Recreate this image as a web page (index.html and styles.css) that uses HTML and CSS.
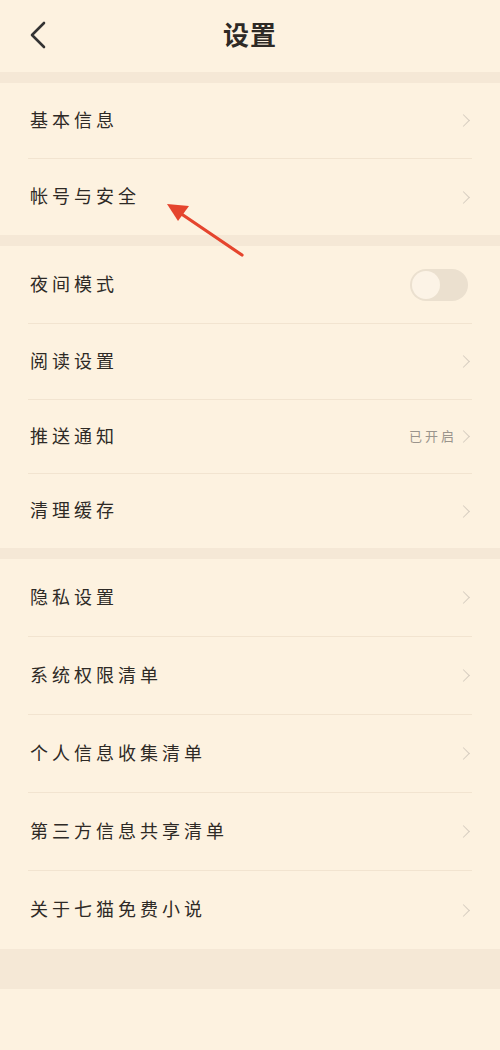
FILE: index.html
```html
<!DOCTYPE html>
<html lang="zh-CN">
<head>
  <meta charset="UTF-8" />
  <title>设置</title>
  <link rel="stylesheet" href="styles.css">
</head>
<body>
  <div id="page">
    <div id="title-bar">
      <span class="back">
        <svg width="18" height="28" viewBox="0 0 18 28"><path d="M15 2 L3 14 L15 26" fill="none" stroke="#333" stroke-width="2.6" stroke-linecap="round" stroke-linejoin="round"/></svg>
      </span>
      <div class="title">设置</div>
    </div>

    <div class="gap"></div>
    <div class="group">
      <div class="row"><span class="label">基本信息</span><span class="chev"></span></div>
      <div class="row"><span class="label">帐号与安全</span><span class="chev"></span></div>
    </div>

    <div class="gap"></div>
    <div class="group">
      <div class="row tall"><span class="label">夜间模式</span><span class="switch"><span class="knob"></span></span></div>
      <div class="row"><span class="label">阅读设置</span><span class="chev"></span></div>
      <div class="row short"><span class="label">推送通知</span><span class="value">已开启</span><span class="chev"></span></div>
      <div class="row short"><span class="label">清理缓存</span><span class="chev"></span></div>
    </div>

    <div class="gap"></div>
    <div class="group">
      <div class="row tall"><span class="label">隐私设置</span><span class="chev"></span></div>
      <div class="row tall"><span class="label">系统权限清单</span><span class="chev"></span></div>
      <div class="row tall"><span class="label">个人信息收集清单</span><span class="chev"></span></div>
      <div class="row tall"><span class="label">第三方信息共享清单</span><span class="chev"></span></div>
      <div class="row tall"><span class="label">关于七猫免费小说</span><span class="chev"></span></div>
    </div>
    <div class="gap footer"></div>

    <svg class="pointer" width="500" height="300" viewBox="0 0 500 300">
      <line x1="242" y1="255" x2="180" y2="213" stroke="#e5452e" stroke-width="3.2" stroke-linecap="round"/>
      <polygon points="167,204 189,206 178,221" fill="#e5452e"/>
    </svg>
  </div>
</body>
</html>
```

FILE: styles.css
```css
:root {
  --bg: #fdf2e0;
  --band: #f5e8d6;
  --line: #f2e4d0;
  --text: #2e2a26;
  --muted: #9a948c;
  --chev: #d6cdc0;
}
body {
  margin: 0;
  background: var(--bg);
  font-family: "Noto Sans CJK SC", "Noto Sans", sans-serif;
  color: var(--text);
}
#page {
  position: relative;
  width: 500px;
  min-height: 1050px;
  background: var(--bg);
}
#title-bar {
  height: 72px;
  display: flex;
  align-items: center;
  justify-content: center;
  position: relative;
}
.back {
  position: absolute;
  left: 29px;
  top: 21px;
}
.title {
  font-size: 26px;
  font-weight: 700;
  letter-spacing: 1px;
  margin-top: -6px;
}
.gap {
  height: 11px;
  background: var(--band);
}
.gap.footer {
  height: 40px;
}
.group {
  padding: 0 28px;
}
.row {
  height: 76px;
  box-sizing: border-box;
  display: flex;
  align-items: center;
  border-bottom: 1px solid var(--line);
}
.group .row:last-child {
  border-bottom: none;
}
.row.tall {
  height: 78px;
}
.row.short {
  height: 74px;
}
.label {
  flex: 1;
  font-size: 18px;
  letter-spacing: 4px;
  padding-left: 2px;
  margin-top: -4px;
}
.value {
  font-size: 13px;
  letter-spacing: 3px;
  color: var(--muted);
  margin-right: 2px;
  margin-top: -2px;
}
.chev {
  width: 8px;
  height: 8px;
  border-top: 1.5px solid var(--chev);
  border-right: 1.5px solid var(--chev);
  transform: rotate(45deg);
  margin-right: 4px;
}
.switch {
  width: 58px;
  height: 32px;
  border-radius: 16px;
  background: #ebe0cf;
  display: flex;
  align-items: center;
  padding: 0 2px;
  box-sizing: border-box;
  margin-right: 4px;
}
.knob {
  width: 28px;
  height: 28px;
  border-radius: 50%;
  background: #fcf3e6;
}
.pointer {
  position: absolute;
  left: 0;
  top: 0;
  pointer-events: none;
}
```
